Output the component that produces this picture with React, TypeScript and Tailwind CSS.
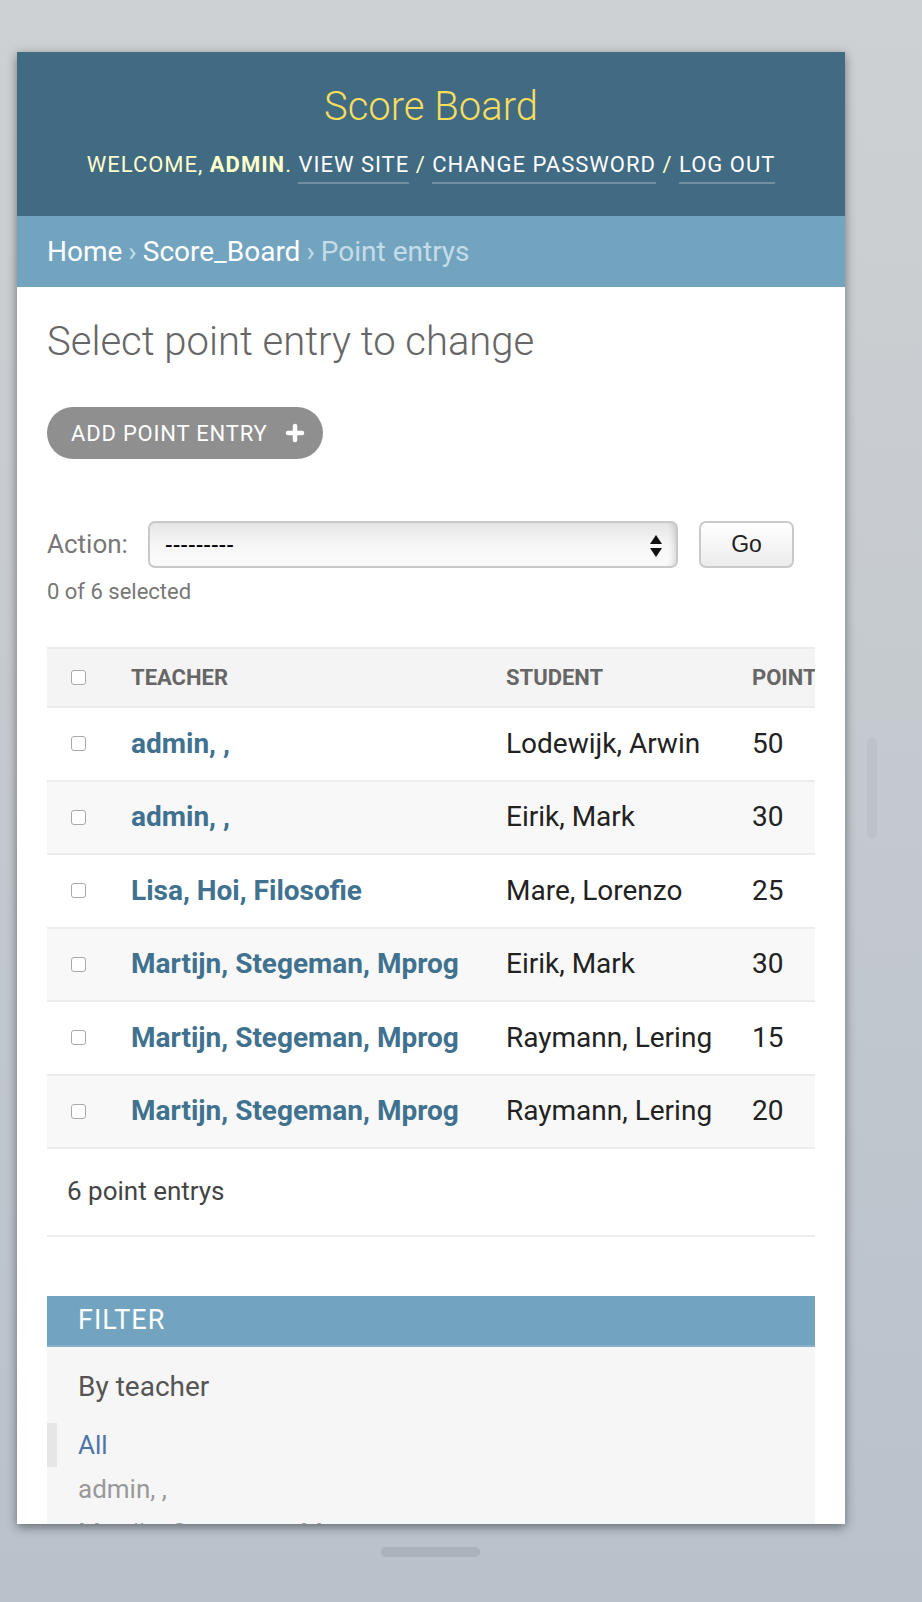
import { Plus } from "lucide-react";

const rows = [
  { teacher: "admin, ,", student: "Lodewijk, Arwin", points: 50 },
  { teacher: "admin, ,", student: "Eirik, Mark", points: 30 },
  { teacher: "Lisa, Hoi, Filosofie", student: "Mare, Lorenzo", points: 25 },
  { teacher: "Martijn, Stegeman, Mprog", student: "Eirik, Mark", points: 30 },
  { teacher: "Martijn, Stegeman, Mprog", student: "Raymann, Lering", points: 15 },
  { teacher: "Martijn, Stegeman, Mprog", student: "Raymann, Lering", points: 20 },
];

function Checkbox() {
  return <span className="block w-[15px] h-[15px] rounded-[3px] border border-[#a9a9a9] bg-white" />;
}

export default function App() {
  return (
    <div className="relative min-h-[1602px] bg-gradient-to-b from-[#ced1d3] to-[#b9c1cb] pt-[52px] pl-[17px] font-['Roboto',sans-serif]">
      {/* simulator scroll indicator + home bar */}
      <div className="absolute left-[867px] top-[738px] w-[10px] h-[100px] rounded-full bg-[#bcc2c9]" />
      <div className="absolute left-[381px] top-[1547px] w-[99px] h-[10px] rounded-full bg-[#aab2bb]" />

      <div className="w-[828px] h-[1472px] overflow-hidden bg-white shadow-[0_3px_10px_rgba(0,0,0,0.45)]">
        {/* Header */}
        <header className="h-[164px] bg-[#416a83] flex flex-col items-center">
          <h1 className="mt-[31px] text-[40px] leading-[48px] font-light text-[#f5dd5d]">Score Board</h1>
          <div className="mt-[19px] text-[22px] leading-[30px] tracking-[1px] uppercase text-[#ffffcc] whitespace-nowrap">
            Welcome, <strong className="font-bold">admin</strong>.{" "}
            <a className="text-white border-b-2 border-white/25 pb-[5px]">View site</a> /{" "}
            <a className="text-white border-b-2 border-white/25 pb-[5px]">Change password</a> /{" "}
            <a className="text-white border-b-2 border-white/25 pb-[5px]">Log out</a>
          </div>
        </header>

        {/* Breadcrumbs */}
        <div className="h-[71px] bg-[#73a4bf] px-[30px] flex items-center text-[28px] text-[#c4dce8] whitespace-nowrap">
          <a className="text-white">Home</a>
          <span className="mx-[6px]">›</span>
          <a className="text-white">Score_Board</a>
          <span className="mx-[6px]">›</span>
          Point entrys
        </div>

        <div className="px-[30px]">
          <h2 className="mt-[31px] text-[40px] leading-[48px] font-light text-[#666]">Select point entry to change</h2>

          <button className="mt-[41px] h-[52px] pl-[24px] pr-[16px] rounded-full bg-[#8f8f8f] text-white text-[22px] tracking-[0.8px] flex items-center gap-[15px]">
            ADD POINT ENTRY
            <Plus className="w-[24px] h-[24px]" strokeWidth={4.5} />
          </button>

          <div className="mt-[62px] flex items-center">
            <label className="text-[26px] text-[#777] w-[101px]">Action:</label>
            <div className="relative w-[530px] h-[47px] rounded-[7px] border-2 border-[#c9c9c9] bg-gradient-to-b from-[#e6e6e6] via-[#f6f6f6] to-[#fbfbfb] shadow-[inset_-6px_0_6px_-4px_rgba(0,0,0,0.15)] flex items-center pl-[15px] font-['Liberation_Sans',sans-serif] text-[23px] text-black">
              ---------
              <svg className="absolute right-[14px] top-[12px]" width="12" height="22" viewBox="0 0 12 22">
                <path d="M6 0 L12 9 L0 9 Z" fill="#111" />
                <path d="M0 13 L12 13 L6 22 Z" fill="#111" />
              </svg>
            </div>
            <button className="ml-[21px] w-[95px] h-[47px] rounded-[7px] border-2 border-[#cacaca] bg-gradient-to-b from-white to-[#ececec] font-['Liberation_Sans',sans-serif] text-[23px] text-[#222]">
              Go
            </button>
          </div>
          <p className="mt-[11px] text-[22px] leading-[26px] text-[#777]">0 of 6 selected</p>

          {/* Results table */}
          <div className="mt-[42px] w-[768px] overflow-hidden">
            <div className="w-[840px]">
              <div className="h-[61px] bg-[#f4f4f4] border-t-2 border-b-2 border-[#ebebeb] flex items-center text-[22px] font-bold text-[#666] uppercase">
                <div className="w-[84px] pl-[24px]"><Checkbox /></div>
                <div className="w-[375px]">Teacher</div>
                <div className="w-[246px]">Student</div>
                <div>Points</div>
              </div>
              {rows.map((r, i) => (
                <div
                  key={i}
                  className={`h-[73.5px] flex items-center border-b-2 border-[#ececec] text-[28px] ${i % 2 === 1 ? "bg-[#f8f8f8]" : "bg-white"}`}
                >
                  <div className="w-[84px] pl-[24px]"><Checkbox /></div>
                  <div className="w-[375px] font-bold text-[#40728f]">{r.teacher}</div>
                  <div className="w-[246px] text-[#222]">{r.student}</div>
                  <div className="text-[#222]">{r.points}</div>
                </div>
              ))}
            </div>
          </div>
          <p className="pl-[20px] pt-[27px] pb-[29px] text-[26px] leading-[30px] text-[#444] border-b-2 border-[#eee]">6 point entrys</p>

          {/* Filter */}
          <div className="mt-[59px] bg-[#f6f6f6]">
            <h3 className="h-[51px] bg-[#73a4bf] border-b-2 border-[#86b2c9] pl-[31px] flex items-center text-[27px] tracking-[1px] text-white">FILTER</h3>
            <h4 className="pl-[31px] pt-[23px] text-[28px] leading-[34px] text-[#555]">By teacher</h4>
            <ul className="mt-[19px] text-[26px]">
              <li className="h-[44px] border-l-[10px] border-[#e6e6e6] pl-[21px] flex items-center text-[#4e74a8]">All</li>
              <li className="h-[44px] pl-[31px] flex items-center text-[#999]">admin, ,</li>
              <li className="h-[44px] pl-[31px] flex items-center text-[#999]">Martijn, Stegeman, Mprog</li>
            </ul>
          </div>
        </div>
      </div>
    </div>
  );
}
